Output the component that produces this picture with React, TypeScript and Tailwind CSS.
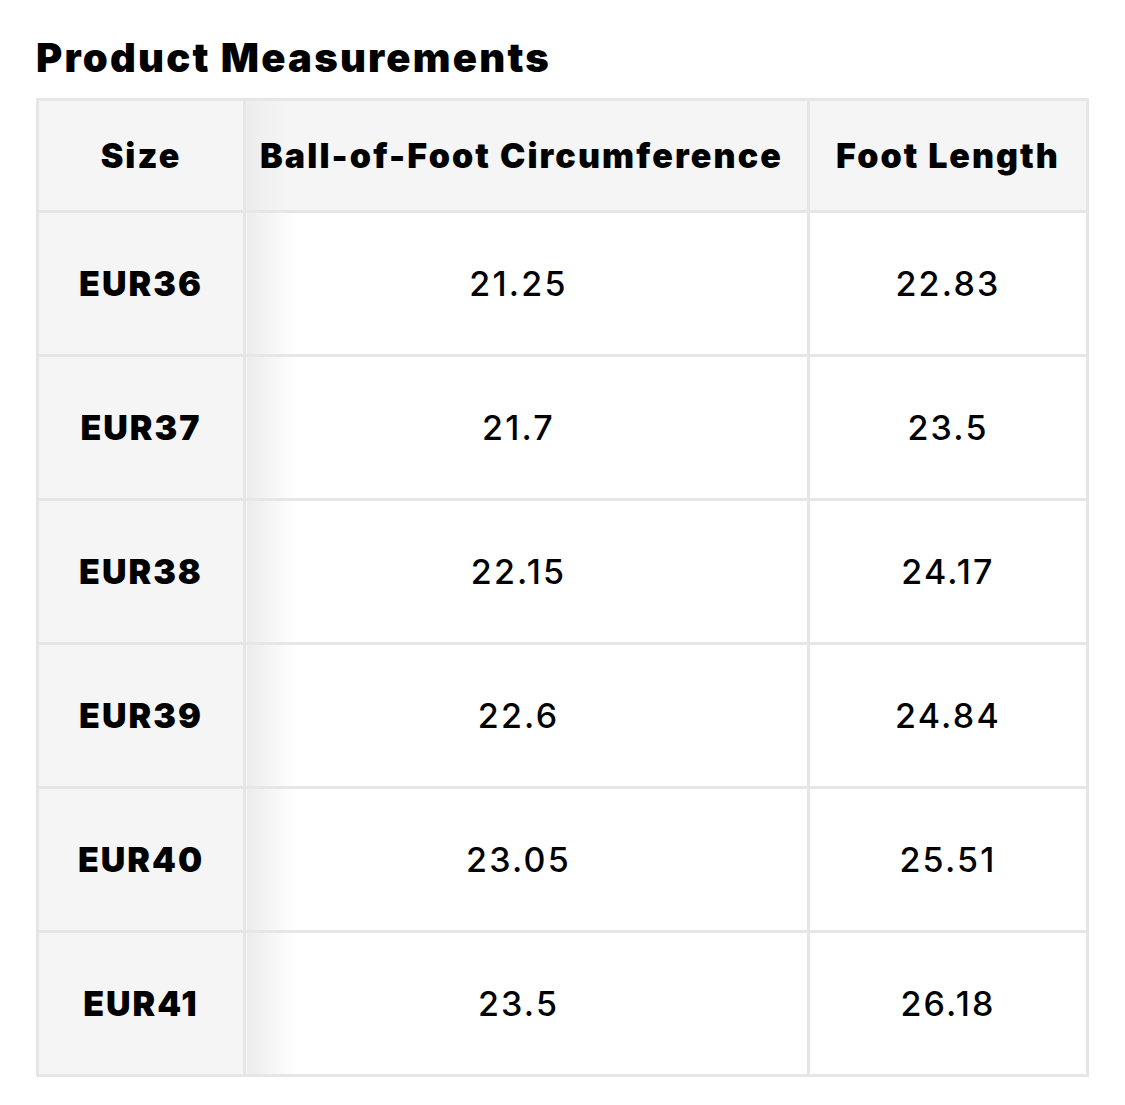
const rows = [
  { size: 'EUR36', ball: '21.25', length: '22.83' },
  { size: 'EUR37', ball: '21.7', length: '23.5' },
  { size: 'EUR38', ball: '22.15', length: '24.17' },
  { size: 'EUR39', ball: '22.6', length: '24.84' },
  { size: 'EUR40', ball: '23.05', length: '25.51' },
  { size: 'EUR41', ball: '23.5', length: '26.18' },
];

export default function App() {
  return (
    <div className="min-h-[1105px] bg-white pl-[36px] pt-[34px] text-black" style={{ fontFamily: 'Inter, "Noto Sans", sans-serif' }}>
      <h2 className="text-[40px] font-black leading-[48px] tracking-[2.2px]">Product Measurements</h2>
      <table className="mt-[16px] w-[1050px] table-fixed border-collapse border-[3px] border-[#e6e6e6]">
        <colgroup>
          <col className="w-[207px]" />
          <col className="w-[564px]" />
          <col className="w-[279px]" />
        </colgroup>
        <thead>
          <tr className="h-[112px] bg-[#f5f5f5]">
            <th className="border-[3px] border-[#e6e6e6] text-[34px] font-black tracking-[2px]">Size</th>
            <th className="border-[3px] border-[#e6e6e6] bg-gradient-to-r from-[#ececec] to-[#f5f5f5] to-[40px] pr-[10px] text-[34px] font-black tracking-[2.1px] whitespace-nowrap">
              Ball-of-Foot Circumference
            </th>
            <th className="border-[3px] border-[#e6e6e6] text-[34px] font-black tracking-[2px] whitespace-nowrap">Foot Length</th>
          </tr>
        </thead>
        <tbody>
          {rows.map((r) => (
            <tr key={r.size} className="h-[144px]">
              <td className="border-[3px] border-[#e6e6e6] bg-[#f5f5f5] text-center text-[34px] font-black tracking-[2px]">{r.size}</td>
              <td className="border-[3px] border-[#e6e6e6] bg-gradient-to-r from-[#ececec] to-white to-[50px] pr-[16px] text-center text-[34px] font-medium tracking-[2.2px]">
                {r.ball}
              </td>
              <td className="border-[3px] border-[#e6e6e6] text-center text-[34px] font-medium tracking-[2.2px]">{r.length}</td>
            </tr>
          ))}
        </tbody>
      </table>
    </div>
  );
}
